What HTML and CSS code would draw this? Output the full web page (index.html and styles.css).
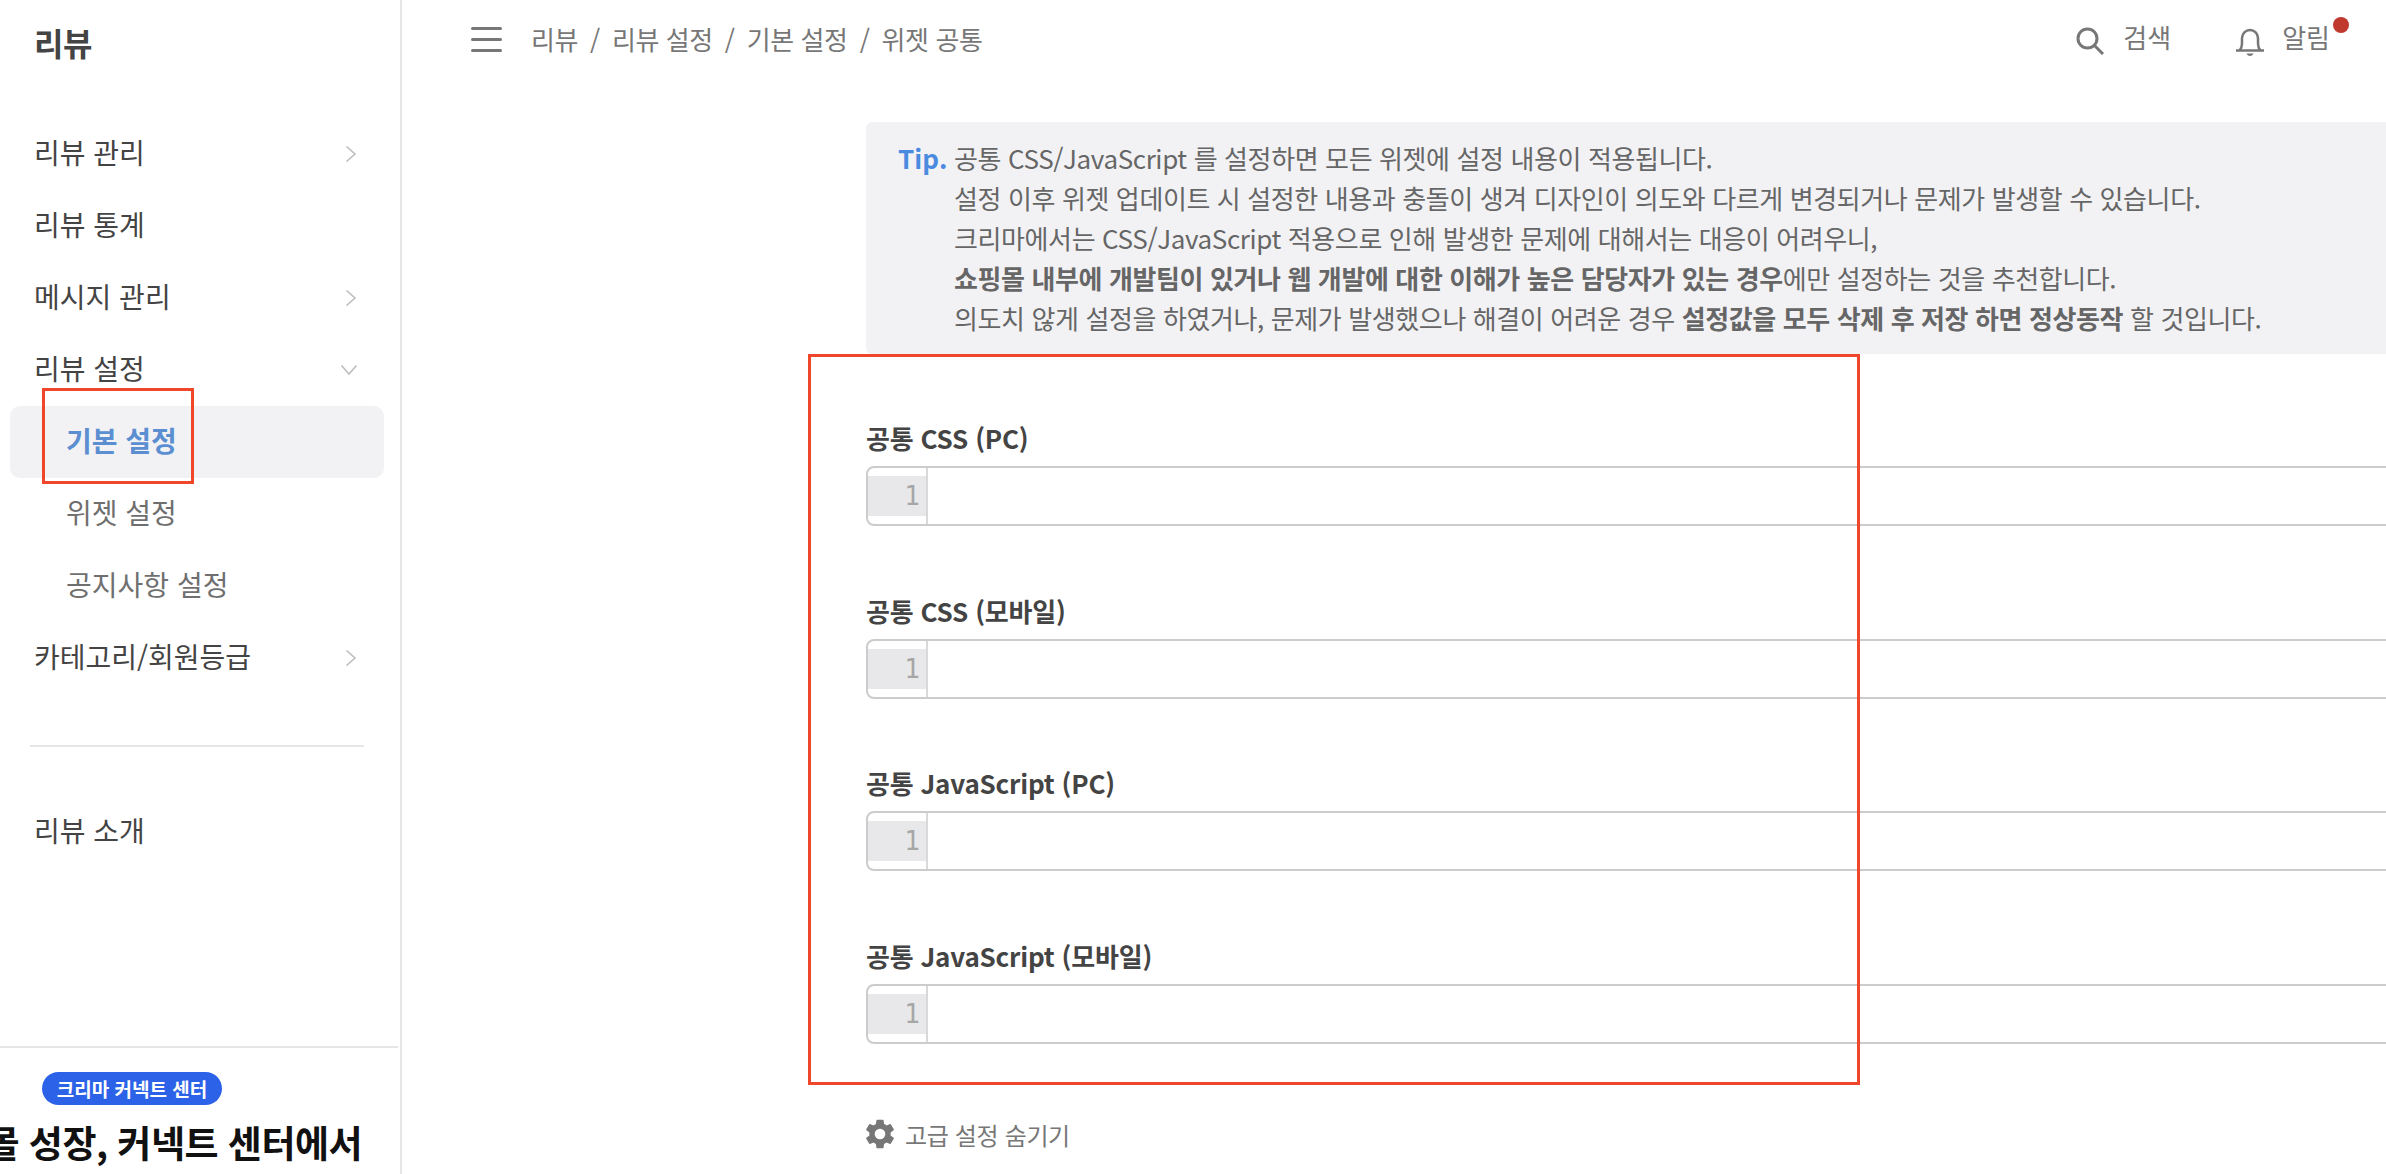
FILE: index.html
```html
<!DOCTYPE html>
<html lang="ko">
<head>
<meta charset="utf-8">
<title>위젯 공통</title>
<link rel="stylesheet" href="styles.css">
</head>
<body>
<div class="app">
  <aside class="sidebar">
    <div class="brand">리뷰</div>
    <nav class="menu">
      <div class="item"><span>리뷰 관리</span><svg class="chev" viewBox="0 0 12 18"><path d="M1.500 1.500 10 9l-8.500 7.500"/></svg></div>
      <div class="item"><span>리뷰 통계</span></div>
      <div class="item"><span>메시지 관리</span><svg class="chev" viewBox="0 0 12 18"><path d="M1.500 1.500 10 9l-8.500 7.500"/></svg></div>
      <div class="item"><span>리뷰 설정</span><svg class="chev-down" viewBox="0 0 18 12"><path d="M1.500 1.500 9 10l7.500-8.500"/></svg></div>
      <div class="item sub active">기본 설정</div>
      <div class="item sub">위젯 설정</div>
      <div class="item sub">공지사항 설정</div>
      <div class="item"><span>카테고리/회원등급</span><svg class="chev" viewBox="0 0 12 18"><path d="M1.500 1.500 10 9l-8.500 7.500"/></svg></div>
    </nav>
    <hr class="divider">
    <div class="item intro"><span>리뷰 소개</span></div>
    <div class="promo">
      <span class="pill">크리마 커넥트 센터</span>
      <p class="promo-title">쇼핑몰 성장, 커넥트 센터에서</p>
      <p class="promo-title promo-next">지금 바로 시작해 보세요</p>
    </div>
    <div class="mark mark-nav"></div>
  </aside>
  <div class="main">
    <header class="topbar">
      <div class="hamburger"><i></i><i></i><i></i></div>
      <div class="crumbs"><span>리뷰</span><b>/</b><span>리뷰 설정</span><b>/</b><span>기본 설정</span><b>/</b><span>위젯 공통</span></div>
      <div class="tool tool-search">
        <svg class="ico" viewBox="0 0 28 28"><circle cx="11.500" cy="11.500" r="9.500"/><path d="M18.500 18.500 27 27"/></svg>
        <span>검색</span>
      </div>
      <div class="tool tool-bell">
        <svg class="ico" viewBox="0 0 30 30"><path d="M1 24.500h28M4.500 24.500c2-2 2.500-4 2.500-8V12a8 8 0 0 1 16 0v4.500c0 4 .5 6 2.500 8"/><path class="fill" d="M11.500 27.500h7c-.5 1.500-2 2.500-3.500 2.500s-3-1-3.500-2.500z"/></svg>
        <span>알림</span>
        <i class="dot"></i>
      </div>
    </header>
    <main class="content">
      <section class="tip">
        <strong class="tip-label">Tip.</strong>
        <div class="tip-text">
          <p>공통 CSS/JavaScript 를 설정하면 모든 위젯에 설정 내용이 적용됩니다.</p>
          <p>설정 이후 위젯 업데이트 시 설정한 내용과 충돌이 생겨 디자인이 의도와 다르게 변경되거나 문제가 발생할 수 있습니다.</p>
          <p>크리마에서는 CSS/JavaScript 적용으로 인해 발생한 문제에 대해서는 대응이 어려우니,</p>
          <p><strong>쇼핑몰 내부에 개발팀이 있거나 웹 개발에 대한 이해가 높은 담당자가 있는 경우</strong>에만 설정하는 것을 추천합니다.</p>
          <p>의도치 않게 설정을 하였거나, 문제가 발생했으나 해결이 어려운 경우 <strong>설정값을 모두 삭제 후 저장 하면 정상동작</strong> 할 것입니다.</p>
        </div>
      </section>
      <div class="form">
        <div class="mark mark-form"></div>
        <div class="field">
          <label class="label">공통 CSS (PC)</label>
          <div class="editor"><div class="gutter"><span>1</span></div></div>
        </div>
        <div class="field">
          <label class="label">공통 CSS (모바일)</label>
          <div class="editor"><div class="gutter"><span>1</span></div></div>
        </div>
        <div class="field">
          <label class="label">공통 JavaScript (PC)</label>
          <div class="editor"><div class="gutter"><span>1</span></div></div>
        </div>
        <div class="field">
          <label class="label">공통 JavaScript (모바일)</label>
          <div class="editor"><div class="gutter"><span>1</span></div></div>
        </div>
      </div>
      <div class="advanced">
        <svg class="gear" viewBox="2.600 1.900 18.800 20.200"><path fill-rule="evenodd" d="M19.140 12.940c.04-.3.060-.61.060-.94s-.020-.64-.070-.94l2.030-1.580a.5.5 0 0 0 .12-.61l-1.920-3.320a.5.5 0 0 0-.59-.22l-2.390.96a7 7 0 0 0-1.620-.94l-.36-2.540a.5.5 0 0 0-.48-.41h-3.840a.5.5 0 0 0-.47.41l-.36 2.540c-.59.240-1.130.57-1.620.94l-2.390-.96a.5.5 0 0 0-.59.22L2.740 8.870a.5.5 0 0 0 .12.61l2.030 1.580c-.05.300-.09.630-.09.940s.020.640.070.940l-2.030 1.580a.5.5 0 0 0-.12.610l1.920 3.320c.12.220.370.290.590.220l2.390-.96c.5.380 1.030.7 1.620.94l.36 2.540c.05.240.24.410.48.410h3.840c.24 0 .44-.17.470-.41l.36-2.540c.59-.240 1.130-.56 1.620-.94l2.390.96c.22.080.47 0 .59-.22l1.920-3.320a.5.5 0 0 0-.12-.61l-2.010-1.580zM12 15.600a3.600 3.600 0 1 1 0-7.200 3.600 3.600 0 0 1 0 7.200z"/></svg>
        <span>고급 설정 숨기기</span>
      </div>
    </main>
  </div>
</div>
</body>
</html>
```
FILE: styles.css
```css
* { box-sizing: border-box; }
html, body { margin: 0; height: 100%; overflow: hidden; background: #fff; }
body { font-family: "Noto Sans CJK KR", "Noto Sans", sans-serif; color: #444; }
p { margin: 0; }

.app { display: flex; height: 1174px; }

.sidebar { position: relative; flex: 0 0 402px; height: 100%; border-right: 2px solid #e6e6e6; display: flex; flex-direction: column; overflow: hidden; }
.brand { height: 118px; padding: 18px 0 0 34px; font-size: 32px; line-height: 48px; font-weight: 700; letter-spacing: -.5px; color: #444; }
.menu { display: flex; flex-direction: column; }
.item { height: 72px; flex: none; display: flex; align-items: center; justify-content: space-between; padding: 0 36px 4px 34px; font-size: 28px; color: #444; }
.item.sub { margin: 0 16px 0 10px; padding-left: 56px; color: #6f6f6f; }
.item.active { background: #f2f2f5; border-radius: 10px; color: #5b8fd1; font-weight: 700; }
.chev { width: 12px; height: 18px; fill: none; stroke: #bdbdbd; stroke-width: 1.600; margin: 4px 7px 0 0; }
.chev-down { width: 18px; height: 12px; fill: none; stroke: #bdbdbd; stroke-width: 1.600; margin: 4px 6px 0 0; }
.divider { width: 334px; height: 2px; flex: none; margin: 51px 0 0 30px; border: 0; background: #e6e6e6; }
.intro { margin-top: 49px; }
.promo { margin-top: auto; border-top: 2px solid #e6e6e6; margin-right: 2px; height: 128px; flex: none; padding-top: 24px; overflow: hidden; }
.pill { display: block; width: 180px; height: 33px; margin-left: 42px; border-radius: 17px; background: #2b62e8; color: #fff; font-size: 19px; font-weight: 700; line-height: 33px; text-align: center; }
.promo-title { margin-top: 12px; height: 50px; display: flex; justify-content: flex-end; padding-right: 36px; font-size: 37px; line-height: 50px; font-weight: 700; color: #111; letter-spacing: -.5px; white-space: nowrap; }
.promo-next { margin-top: 0; padding-right: 144px; }

.mark { position: absolute; border: 3px solid #f0472b; pointer-events: none; z-index: 2; }
.mark-nav { left: 42px; top: 388px; width: 152px; height: 96px; }
.mark-form { left: -58px; top: 0; width: 1052px; height: 731px; }

.main { flex: 1; min-width: 0; display: flex; flex-direction: column; overflow: hidden; }
.topbar { position: relative; height: 80px; flex: none; display: flex; align-items: center; padding-left: 69px; font-size: 26px; color: #777; }
.hamburger { width: 31px; display: flex; flex-direction: column; gap: 8px; margin-top: -1px; }
.hamburger i { display: block; height: 3px; background: #777; border-radius: 2px; }
.crumbs { margin-left: 29px; display: flex; gap: 12px; margin-top: -3px; letter-spacing: -.4px; }
.crumbs b { font-weight: 400; }
.tool { display: flex; align-items: center; gap: 19px; margin-top: -8px; }
.tool-search { margin-left: auto; }
.tool-search .ico { margin-top: 9px; }
.tool-bell { position: relative; margin-left: 64px; margin-right: 56px; gap: 17px; }
.ico { width: 28px; height: 28px; fill: none; stroke: #777; stroke-width: 3; }
.tool-bell .ico { width: 30px; height: 30px; stroke-width: 2.500; margin-top: 10px; }
.ico .fill { fill: #777; stroke: none; }
.dot { position: absolute; right: -19px; top: 1px; width: 16px; height: 16px; border-radius: 50%; background: #c0392f; }

.content { flex: 1; padding: 42px 0 0 464px; min-height: 0; }
.tip { display: flex; height: 232px; margin-right: -20px; padding: 16px 0 0 32px; background: #f2f2f5; border-radius: 6px; font-size: 26px; line-height: 40px; color: #666; letter-spacing: -.39px; }
.tip-label { width: 56px; flex: none; font-size: 26px; color: #4a8be0; letter-spacing: 0; }
.tip-text strong { font-weight: 700; }

.form { position: relative; padding-top: 64px; margin-right: -20px; }
.field { height: 172.700px; }
.label { display: block; height: 48px; font-size: 26px; line-height: 40px; font-weight: 700; color: #444; letter-spacing: -.2px; }
.editor { height: 60px; border: 2px solid #ccc; border-radius: 8px; }
.gutter { width: 60px; height: 100%; border-right: 2px solid #d9d9d9; padding-top: 8px; }
.gutter span { display: block; height: 40px; background: #e8e8ea; font-family: "DejaVu Sans Mono", monospace; font-size: 26px; line-height: 40px; text-align: right; padding-right: 6px; color: #a6a6a6; }

.advanced { margin-top: 8px; display: flex; align-items: center; gap: 11px; font-size: 24px; color: #777; letter-spacing: -.35px; }
.gear { width: 28px; height: 30px; fill: #777; }
```
